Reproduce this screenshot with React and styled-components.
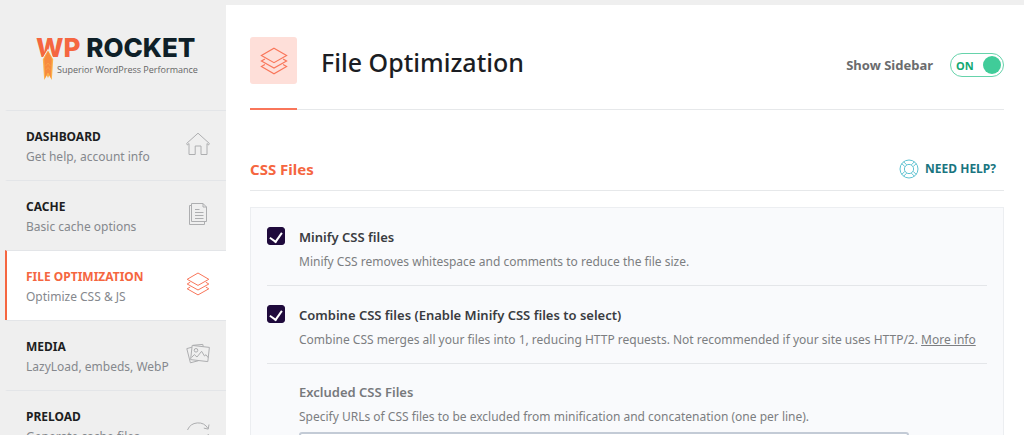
import React, { useState } from "react";
import styled, { createGlobalStyle } from "styled-components";

const menu = [
  { id: "dashboard", title: "DASHBOARD", text: "Get help, account info" },
  { id: "cache", title: "CACHE", text: "Basic cache options" },
  { id: "file", title: "FILE OPTIMIZATION", text: "Optimize CSS & JS" },
  { id: "media", title: "MEDIA", text: "LazyLoad, embeds, WebP" },
  { id: "preload", title: "PRELOAD", text: "Generate cache files" },
];

const LayersIcon = ({ size }) => (
  <Icon $size={size} viewBox="0 0 24 24">
    <path d="M12 1 L22.8 7.3 L12 13.4 L1.2 7.3 Z" />
    <path d="M4.2 10.2 L1.2 12 L12 18 L22.8 12 L19.8 10.2" />
    <path d="M4.2 15 L1.2 16.8 L12 22.9 L22.8 16.8 L19.8 15" />
  </Icon>
);

const icons = {
  dashboard: (
    <Icon24>
      <path d="M3 11.5 L1.4 13 L0.7 11.4 L12 1.2 L23.3 11.4 L22.6 13 L21 11.5 V22.5 H15 V14 H9.2 V22.5 H3 Z" />
    </Icon24>
  ),
  cache: (
    <Icon24>
      <path d="M5.5 1.5 H17 L20.5 5 V19.5 H5.5 Z" />
      <path d="M17 1.5 V5 H20.5" />
      <path d="M5.5 3.5 H3.5 V22.5 H18.5 V19.5" />
      <path d="M9 7.5 H13.5 M9 10.5 H17.5 M9 13.5 H17.5 M9 16.5 H17.5" />
    </Icon24>
  ),
  file: <LayersIcon size={24} />,
  media: (
    <Icon24>
      <path d="M6.2 3.4 L23.4 5.4 L21.8 19.6 L4.6 17.6 Z" />
      <path d="M6 5.2 L0.8 6.6 L4.4 20.8 L12.5 18.7" />
      <path d="M7 3.3 L16.8 2.4 L17.2 4.5" />
      <circle cx="10" cy="8.3" r="1.8" />
      <path d="M5.5 15.6 L8.3 12.6 L11 15 L15.6 9.3 L18.5 14 L20 12.7 L22.2 15.7" />
    </Icon24>
  ),
  preload: (
    <Icon24>
      <path d="M1.5 18 A11.5 11.5 0 0 1 22 16.5" />
      <path d="M23 12.5 L22.2 17.1 L17.8 16.1" />
      <path d="M22.5 22 A11.5 11.5 0 0 1 2 23.5" />
    </Icon24>
  ),
};

function Icon24({ children }) {
  return (
    <Icon $size={24} viewBox="0 0 24 24">
      {children}
    </Icon>
  );
}

const Logo = () => (
  <LogoLink href="#dashboard">
    <LogoName>
      <span>WP</span> ROCKET
    </LogoName>
    <LogoText>Superior WordPress Performance</LogoText>
    <Flame viewBox="0 0 14 32">
      <path d="M7 0 L12.2 10 L10.8 31 L8.2 26.5 L7 29 L5.8 26.5 L3.2 31 L1.8 10 Z" fill="#fbb04a" />
      <path d="M7 2 L10.8 10 L9.8 29 L7.6 24 H6.4 L4.2 29 L3.2 10 Z" fill="#f78a3f" />
      <path d="M4.6 17 L7 14 L9.4 17 M4.8 21 L7 18.4 L9.2 21" fill="none" stroke="#f9a048" strokeWidth="1" />
      <path d="M1.4 10 L7 0.5 L12.6 10" fill="none" stroke="#efefef" strokeWidth="1" />
    </Flame>
  </LogoLink>
);

const Option = ({ id, label, children }) => {
  const [checked, setChecked] = useState(true);
  return (
    <OptionRow>
      <Checkbox
        id={id}
        type="checkbox"
        checked={checked}
        onChange={() => setChecked(!checked)}
      />
      <div>
        <OptionLabel htmlFor={id}>{label}</OptionLabel>
        <Description>{children}</Description>
      </div>
    </OptionRow>
  );
};

const App = () => {
  const [sidebar, setSidebar] = useState(true);
  return (
    <>
      <GlobalStyle />
      <Page>
        <Sidebar>
          <Logo />
          <nav>
            {menu.map((item) => (
              <MenuItem
                key={item.id}
                href={`#${item.id}`}
                $active={item.id === "file"}
              >
                <div>
                  <MenuTitle>{item.title}</MenuTitle>
                  <MenuText>{item.text}</MenuText>
                </div>
                {icons[item.id]}
              </MenuItem>
            ))}
          </nav>
        </Sidebar>
        <Content>
          <Header>
            <HeaderIcon>
              <IconBox>
                <LayersIcon size={28} />
              </IconBox>
            </HeaderIcon>
            <h1>File Optimization</h1>
            <SwitchLabel>
              Show Sidebar
              <Switch $on={sidebar}>
                <input
                  type="checkbox"
                  checked={sidebar}
                  onChange={() => setSidebar(!sidebar)}
                />
                <span>{sidebar ? "ON" : "OFF"}</span>
                <i />
              </Switch>
            </SwitchLabel>
          </Header>
          <SectionHeader>
            <h2>CSS Files</h2>
            <HelpButton type="button">
              <Icon $size={20} viewBox="0 0 20 20">
                <circle cx="10" cy="10" r="9" />
                <circle cx="10" cy="10" r="4.6" />
                <path d="M2.8 4.6 L5.8 7.6 M4.6 2.8 L7.6 5.8 M17.2 4.6 L14.2 7.6 M15.4 2.8 L12.4 5.8 M2.8 15.4 L5.8 12.4 M4.6 17.2 L7.6 14.2 M17.2 15.4 L14.2 12.4 M15.4 17.2 L12.4 14.2" />
              </Icon>
              NEED HELP?
            </HelpButton>
          </SectionHeader>
          <Panel>
            <Option id="minify" label="Minify CSS files">
              Minify CSS removes whitespace and comments to reduce the file
              size.
            </Option>
            <Option
              id="combine"
              label="Combine CSS files (Enable Minify CSS files to select)"
            >
              Combine CSS merges all your files into 1, reducing HTTP requests.
              Not recommended if your site uses HTTP/2.{" "}
              <a href="#more">More info</a>
            </Option>
            <Field>
              <FieldLabel htmlFor="excluded">Excluded CSS Files</FieldLabel>
              <Description>
                Specify URLs of CSS files to be excluded from minification and
                concatenation (one per line).
              </Description>
              <TextArea id="excluded" rows="5" />
            </Field>
          </Panel>
        </Content>
      </Page>
    </>
  );
};

const GlobalStyle = createGlobalStyle`
  * {
    box-sizing: border-box;
  }
  html {
    height: 100%;
    overflow: hidden;
  }
  body {
    margin: 0;
    background: #efefef;
    font-family: "Noto Sans", "Open Sans", sans-serif;
    font-size: 12px;
    color: #777a7e;
  }
  h1, h2, p {
    margin: 0;
  }
  a {
    color: inherit;
  }
`;

const Icon = styled.svg`
  flex: none;
  width: ${({ $size }) => $size}px;
  height: ${({ $size }) => $size}px;
  fill: none;
  stroke: currentColor;
  stroke-width: 1;
`;

const Page = styled.div`
  display: flex;
  padding: 5px 0 0 5px;
`;

const Sidebar = styled.aside`
  flex: none;
  width: 221px;
`;

const LogoLink = styled.a`
  position: relative;
  display: block;
  height: 105px;
  padding: 27px 0 0 31px;
  text-decoration: none;
  white-space: nowrap;
`;

const LogoName = styled.div`
  font-family: Inter, sans-serif;
  font-size: 26px;
  line-height: 32px;
  font-weight: 800;
  color: #0e1f28;
  span {
    color: #f56640;
  }
`;

const LogoText = styled.div`
  padding-left: 21px;
  font-family: "Open Sans", sans-serif;
  font-size: 9px;
  line-height: 12px;
  color: #666;
`;

const Flame = styled.svg`
  position: absolute;
  left: 36px;
  top: 44px;
  width: 14px;
  height: 32px;
`;

const MenuItem = styled.a`
  display: flex;
  justify-content: space-between;
  align-items: flex-start;
  height: 70px;
  padding: 16px 16px 0 19px;
  border-top: 1px solid #e3e5e8;
  border-left: 2px solid ${({ $active }) => ($active ? "#f56640" : "transparent")};
  background: ${({ $active }) => ($active ? "#fff" : "transparent")};
  color: ${({ $active }) => ($active ? "#f56640" : "#1d1e22")};
  text-decoration: none;
  svg {
    margin-top: 5px;
    color: ${({ $active }) => ($active ? "#f9765a" : "#adaeb0")};
  }
`;

const MenuTitle = styled.div`
  font-size: 12px;
  line-height: 20px;
  font-weight: 700;
`;

const MenuText = styled.div`
  font-size: 12px;
  line-height: 20px;
  color: #85888d;
`;

const Content = styled.main`
  flex: 1;
  min-width: 0;
  min-height: 100vh;
  padding: 32px 20px 0 24px;
  background: #fff;
`;

const Header = styled.header`
  display: flex;
  height: 73px;
  border-bottom: 1px solid #e6e8ea;
  h1 {
    flex: 1;
    padding-left: 24px;
    font-size: 25px;
    line-height: 50px;
    font-weight: 500;
    color: #1b1d23;
  }
`;

const HeaderIcon = styled.div`
  height: 73px;
  border-bottom: 2px solid #f9765a;
`;

const IconBox = styled.div`
  display: flex;
  align-items: center;
  justify-content: center;
  width: 47px;
  height: 47px;
  border-radius: 3px;
  background: #fedfd9;
  color: #f9765a;
`;

const SwitchLabel = styled.label`
  display: flex;
  align-items: center;
  gap: 17px;
  height: 56px;
  font-size: 13px;
  font-weight: 700;
  color: #6b6c6e;
`;

const Switch = styled.span`
  display: flex;
  align-items: center;
  justify-content: space-between;
  width: 54px;
  height: 24px;
  padding: 0 2px 0 5px;
  border: 1px solid #66d3ab;
  border-radius: 12px;
  background: #fff;
  font-size: 11px;
  font-weight: 700;
  color: #12a873;
  flex-direction: ${({ $on }) => ($on ? "row" : "row-reverse")};
  input {
    position: absolute;
    opacity: 0;
  }
  i {
    width: 18px;
    height: 18px;
    border-radius: 50%;
    background: #40cc99;
  }
`;

const SectionHeader = styled.div`
  display: flex;
  justify-content: space-between;
  align-items: flex-end;
  height: 81px;
  padding: 0 8px 9px 0;
  border-bottom: 1px solid #e6e8ea;
  h2 {
    font-size: 15px;
    line-height: 24px;
    font-weight: 700;
    color: #f56640;
  }
`;

const HelpButton = styled.button`
  display: flex;
  align-items: center;
  gap: 6px;
  padding: 0;
  border: 0;
  background: none;
  font-family: inherit;
  font-size: 12px;
  line-height: 24px;
  font-weight: 700;
  color: #19757f;
  cursor: pointer;
  svg {
    color: #5fc3d2;
  }
`;

const Panel = styled.section`
  margin-top: 16px;
  padding: 0 16px 20px;
  border: 1px solid #eceef1;
  background: #f9fafc;
`;

const OptionRow = styled.div`
  display: flex;
  gap: 14px;
  height: 78px;
  padding-top: 18px;
  border-bottom: 1px solid #e4e6e9;
`;

const Checkbox = styled.input`
  appearance: none;
  flex: none;
  display: flex;
  justify-content: center;
  width: 18px;
  height: 18px;
  margin: 1px 0 0;
  border: 1px solid #1f0a3c;
  border-radius: 3px;
  background: #fff;
  &:checked {
    background: #1f0a3c;
  }
  &:checked::after {
    content: "";
    width: 6px;
    height: 10px;
    margin-top: 2px;
    border: solid #fff;
    border-width: 0 2px 2px 0;
    transform: rotate(35deg);
  }
`;

const OptionLabel = styled.label`
  display: block;
  font-size: 13px;
  line-height: 22px;
  font-weight: 600;
  color: #3a3c41;
`;

const Description = styled.p`
  padding-top: 3px;
  font-size: 12px;
  line-height: 22px;
  color: #7c7e81;
`;

const Field = styled.div`
  padding: 17px 0 0 32px;
`;

const FieldLabel = styled(OptionLabel)`
  color: #77797c;
`;

const TextArea = styled.textarea`
  display: block;
  width: 610px;
  max-width: 100%;
  margin-top: 4px;
  padding: 8px;
  border: 2px solid #c3cbd6;
  border-radius: 3px;
  background: #fff;
  font: inherit;
`;

export default App;
